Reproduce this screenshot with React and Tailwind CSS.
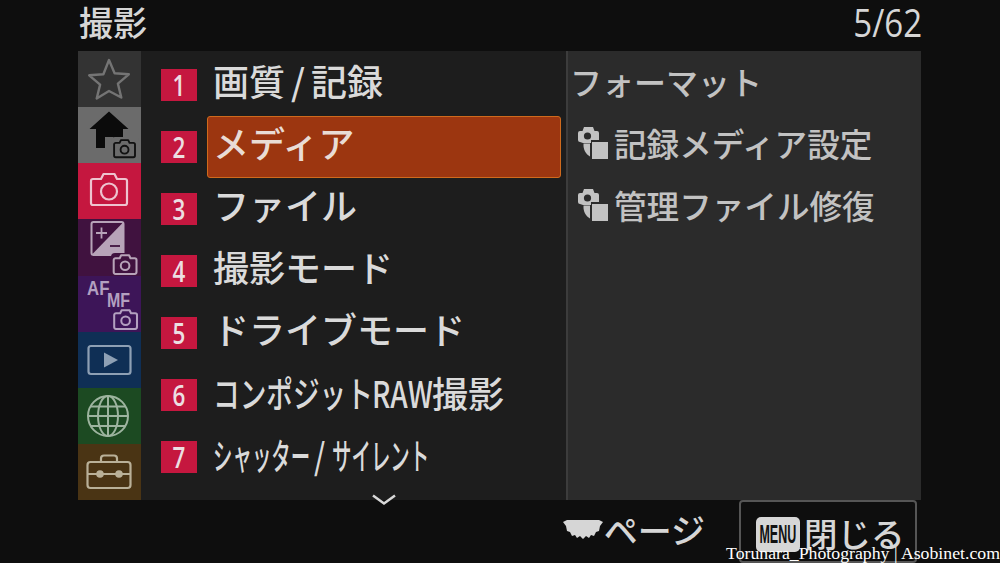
const jp = "font-['Noto_Sans_CJK_JP','Noto_Sans',sans-serif]";

const CamSmall = ({ x, y, s = 1, color }) => (
  <g transform={`translate(${x} ${y}) scale(${s})`} fill="none" stroke={color} strokeWidth="1.7">
    <path d="M1 5.500a1.500 1.500 0 0 1 1.500-1.500H6l1.200-2.500h6.600L15 4h3.500A1.500 1.500 0 0 1 20 5.500v10a1.500 1.500 0 0 1-1.500 1.500h-16A1.500 1.500 0 0 1 1 15.500z" strokeLinejoin="round" />
    <circle cx="10.500" cy="10.200" r="3.600" />
  </g>
);

const tabs = [
  {
    bg: "bg-[#333333]",
    icon: <path d="M31 9l5.600 13.200 14.200 1.100-10.900 9.300 3.400 13.900L31 40l-12.300 7.500 3.400-13.900-10.900-9.300 14.200-1.100z" fill="none" stroke="#747474" strokeWidth="2.400" strokeLinejoin="round" />,
  },
  {
    bg: "bg-[#6b6b6b]",
    icon: (
      <>
        <path d="M31 4.500L50.500 22H45v19H35V30h-8v11H18V22h-6.500z" fill="#0b0b0b" />
        <rect x="33" y="30" width="28" height="24" rx="4" fill="#6b6b6b" />
        <CamSmall x={35} y={31.500} s={1.100} color="#111111" />
      </>
    ),
  },
  {
    bg: "bg-[#c5173f]",
    icon: (
      <g fill="none" stroke="#eec3cf" strokeWidth="2.200" strokeLinejoin="round">
        <path d="M13 18a2 2 0 0 1 2-2h8l2.500-5h11l2.500 5h8a2 2 0 0 1 2 2v22a2 2 0 0 1-2 2H15a2 2 0 0 1-2-2z" />
        <circle cx="31" cy="28.500" r="8" />
      </g>
    ),
  },
  {
    bg: "bg-[#40123f]",
    icon: (
      <>
        <rect x="13.500" y="3" width="32" height="33" rx="2" fill="none" stroke="#b7a3b8" strokeWidth="2" />
        <path d="M45 3.500V34a1.500 1.500 0 0 1-1.500 1.500H14z" fill="#b7a3b8" />
        <path d="M18 14h11M23.500 8.500v11" stroke="#b7a3b8" strokeWidth="1.800" />
        <path d="M32 27h10" stroke="#40123f" strokeWidth="1.800" />
        <rect x="33" y="34" width="28" height="23" rx="4" fill="#40123f" />
        <CamSmall x={34.500} y={34.500} s={1.200} color="#b7a3b8" />
      </>
    ),
  },
  {
    bg: "bg-[#3d1558]",
    icon: <CamSmall x={35} y={32.500} s={1.200} color="#b3a0c0" />,
    af: true,
  },
  {
    bg: "bg-[#0f2f55]",
    icon: (
      <>
        <rect x="10.500" y="14" width="42" height="28" rx="2.500" fill="none" stroke="#8ea0b4" strokeWidth="2.200" />
        <path d="M26 20.500l14 7.500-14 7.500z" fill="#8ea0b4" />
      </>
    ),
  },
  {
    bg: "bg-[#1c4a22]",
    icon: (
      <g fill="none" stroke="#9db49f" strokeWidth="2">
        <circle cx="30" cy="28" r="20" />
        <ellipse cx="30" cy="28" rx="10" ry="20" />
        <path d="M30 8v40M13 18.500h34M10 28h40M13 38h34" />
      </g>
    ),
  },
  {
    bg: "bg-[#4a3414]",
    icon: (
      <>
        <g fill="none" stroke="#b9b098" strokeWidth="2.200" strokeLinejoin="round">
          <rect x="9.500" y="18" width="43" height="26" rx="3" />
          <path d="M23 18v-3.500a3 3 0 0 1 3-3h10a3 3 0 0 1 3 3V18M9.500 30h43" />
        </g>
        <circle cx="22" cy="30" r="3.800" fill="#b9b098" />
        <circle cx="41" cy="30" r="3.800" fill="#b9b098" />
      </>
    ),
  },
];

// segments étroits : largeur fixe + échelle horizontale
const Seg = ({ w, s, children }) => (
  <span className="inline-block whitespace-nowrap" style={{ width: w }}>
    <span className="inline-block origin-left" style={{ transform: `scaleX(${s})` }}>
      {children}
    </span>
  </span>
);

const rows = [
  {
    n: 1,
    label: (
      <>
        画質<span className="mx-[6px]">/</span>記録
      </>
    ),
  },
  { n: 2, label: "メディア", active: true },
  { n: 3, label: "ファイル" },
  { n: 4, label: "撮影モード" },
  { n: 5, label: "ドライブモード" },
  {
    n: 6,
    narrow: true,
    label: (
      <>
        <Seg w={159} s={0.74}>コンポジット</Seg>
        <Seg w={60} s={0.78}>RAW</Seg>
        <span>撮影</span>
      </>
    ),
  },
  {
    n: 7,
    narrow: true,
    label: (
      <>
        <Seg w={101} s={0.54}>シャッター</Seg>
        <Seg w={18} s={0.8}>/</Seg>
        <Seg w={96} s={0.54}>サイレント</Seg>
      </>
    ),
  },
];

function Tab({ tab }) {
  return (
    <div className={`relative h-[56.125px] w-full ${tab.bg}`}>
      <svg width="63" height="56" viewBox="0 0 63 56" className="block">
        {tab.icon}
      </svg>
      {tab.af && (
        <div className="absolute inset-0 font-['Liberation_Sans',sans-serif] font-bold text-[#b3a0c0]">
          <span className="absolute left-[9px] top-[1px] origin-left scale-x-[0.8] text-[21px] leading-[22px]">AF</span>
          <span className="absolute left-[29px] top-[13px] origin-left scale-x-[0.76] text-[21px] leading-[22px]">MF</span>
        </div>
      )}
    </div>
  );
}

function Row({ row }) {
  return (
    <div className="flex h-[62px] items-center">
      <div className="flex h-[32px] w-[36px] shrink-0 items-center justify-center bg-[#c5173f] font-['Open_Sans',sans-serif] text-[28px] font-semibold text-[#ecdfe2]">
        <span className="inline-block scale-x-[0.8] leading-none">{row.n}</span>
      </div>
      <div
        className={`ml-[10px] flex h-[62px] w-[354px] items-center rounded-[3px] border pl-[5px] whitespace-nowrap ${
          row.narrow ? "pb-[6px]" : "pb-[10px]"
        } ${row.active ? "border-[#cf6a1d] bg-[#9c3610] text-[#e9dcd5]" : "border-transparent text-[#dadada]"}`}
      >
        <span className="text-[36px] leading-none font-medium">{row.label}</span>
      </div>
    </div>
  );
}

// appareil plein + carré (icône des réglages mémorisés)
const CamSquare = () => (
  <svg width="32" height="34" viewBox="0 0 32 34" className="shrink-0">
    <path d="M1 7a2 2 0 0 1 2-2h2.500L7 1h9l1.500 4H20a2 2 0 0 1 2 2v7h-8v3H6l-3-1a2 2 0 0 1-2-2z" fill="#c2c2c2" />
    <circle cx="10.500" cy="10" r="3.600" fill="#2b2b2b" />
    <path d="M6.500 17.500h6.500v13c-4-2-7-7-6.500-13z" fill="#c2c2c2" />
    <rect x="15" y="16" width="16" height="17" fill="#c2c2c2" />
  </svg>
);

export default function App() {
  return (
    <div className={`relative flex h-[563px] w-[1000px] flex-col overflow-hidden bg-[#0e0e0e] ${jp}`}>
      {/* Titre */}
      <header className="flex h-[51px] items-start justify-between pl-[79px] pr-[78px] text-[#d6d6d6]">
        <span className="text-[34px] leading-[44px] font-medium">撮影</span>
        <span className="inline-block origin-right scale-x-[0.87] font-['Open_Sans',sans-serif] text-[38px] leading-[44px] whitespace-nowrap">5/62</span>
      </header>

      <main className="mx-[78px] flex h-[449px] w-[843px]">
        <div className="w-[63px] shrink-0">
          {tabs.map((tab, i) => (
            <Tab key={i} tab={tab} />
          ))}
        </div>

        <div className="relative w-[425px] shrink-0 bg-[#1d1d1d] pl-[20px] pt-[3px]">
          {rows.map((row) => (
            <Row key={row.n} row={row} />
          ))}
          <svg width="26" height="12" viewBox="0 0 26 12" className="absolute bottom-[-6px] left-[230px]">
            <path d="M2 1.500l11 8 11-8" fill="none" stroke="#d8d8d8" strokeWidth="2.500" />
          </svg>
        </div>

        <div className="flex-1 border-l-2 border-[#3c3c3c] bg-[#2b2b2b] pl-[2px] pt-[5px] text-[#c2c2c2] font-medium">
          <div className="flex h-[50px] items-center text-[32px] leading-none">フォーマット</div>
          <div className="mt-[12px] flex h-[50px] items-center gap-[5px] pl-[7px] text-[32.600px] leading-none whitespace-nowrap">
            <CamSquare />
            記録メディア設定
          </div>
          <div className="mt-[12px] flex h-[50px] items-center gap-[5px] pl-[7px] text-[32.600px] leading-none whitespace-nowrap">
            <CamSquare />
            管理ファイル修復
          </div>
        </div>
      </main>

      {/* Bas */}
      <footer className="flex flex-1 items-start justify-end pr-[83px] text-[#d6d6d6]">
        <div className="mt-[8px] flex items-center">
          <svg width="42" height="26" viewBox="0 0 42 26">
            <path d="M1 5l4-2h32l4 2-3 4-1 5-3 1-2 4-3-1-2 3-3-2-3 3-3-3-3 2-2-3-3 1-2-4-3-1-1-5z" fill="#d6d6d6" />
          </svg>
          <span className="text-[34px] leading-[44px] font-medium">ページ</span>
        </div>
        <div className="ml-[34px] flex h-[63px] w-[178px] items-start gap-[4px] rounded-[4px] border-2 border-[#555555] pl-[15px] pt-[9px]">
          <div className="mt-[6px] flex h-[35px] w-[44px] items-center justify-center overflow-hidden rounded-[5px] bg-[#d6d6d6] font-['Liberation_Sans',sans-serif] text-[25px] font-bold text-[#111111]">
            <span className="inline-block scale-x-[0.5]">MENU</span>
          </div>
          <span className="text-[33.500px] leading-[44px] font-medium whitespace-nowrap">閉じる</span>
        </div>
      </footer>

      <span className="absolute bottom-[1px] right-0 font-['Liberation_Serif',serif] text-[17.750px] leading-[18px] whitespace-nowrap text-white">
        Torunara_Photography | Asobinet.com
      </span>
    </div>
  );
}
